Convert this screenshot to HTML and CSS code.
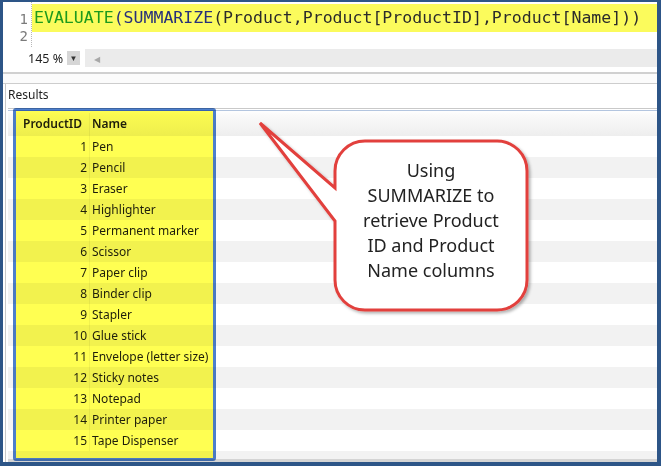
FILE: index.html
```html
<!DOCTYPE html>
<html lang="en">
<head>
    <meta charset="UTF-8">
    <title>SUMMARIZE - Results</title>
    <link rel="stylesheet" href="styles.css">
</head>
<body>
    <div class="frame">
        <!-- Редактор запроса -->
        <div class="editor">
            <div class="gutter"><span>1</span><span>2</span></div>
            <div class="code">
                <div class="line hl"><span class="kw">EVALUATE</span><span class="fn">(SUMMARIZE</span>(Product,Product[ProductID],Product[Name]))</div>
            </div>
        </div>

        <div class="zoombar">
            <span class="zoom">145 %</span>
            <span class="zoom-drop">&#9660;</span>
            <div class="hscroll"><span class="arrow">&#9664;</span></div>
        </div>

        <div class="splitter"></div>

        <!-- Результаты -->
        <div class="results">
            <div class="results-title">Results</div>
            <div class="grid">
                <div class="row head">
                    <div class="sel"></div>
                    <div class="id">ProductID</div>
                    <div class="name">Name</div>
                    <div class="fill"></div>
                </div>
                <div class="row"><div class="sel"></div><div class="id num">1</div><div class="name">Pen</div><div class="fill"></div></div>
                <div class="row"><div class="sel"></div><div class="id num">2</div><div class="name">Pencil</div><div class="fill"></div></div>
                <div class="row"><div class="sel"></div><div class="id num">3</div><div class="name">Eraser</div><div class="fill"></div></div>
                <div class="row"><div class="sel"></div><div class="id num">4</div><div class="name">Highlighter</div><div class="fill"></div></div>
                <div class="row"><div class="sel"></div><div class="id num">5</div><div class="name">Permanent marker</div><div class="fill"></div></div>
                <div class="row"><div class="sel"></div><div class="id num">6</div><div class="name">Scissor</div><div class="fill"></div></div>
                <div class="row"><div class="sel"></div><div class="id num">7</div><div class="name">Paper clip</div><div class="fill"></div></div>
                <div class="row"><div class="sel"></div><div class="id num">8</div><div class="name">Binder clip</div><div class="fill"></div></div>
                <div class="row"><div class="sel"></div><div class="id num">9</div><div class="name">Stapler</div><div class="fill"></div></div>
                <div class="row"><div class="sel"></div><div class="id num">10</div><div class="name">Glue stick</div><div class="fill"></div></div>
                <div class="row"><div class="sel"></div><div class="id num">11</div><div class="name">Envelope (letter size)</div><div class="fill"></div></div>
                <div class="row"><div class="sel"></div><div class="id num">12</div><div class="name">Sticky notes</div><div class="fill"></div></div>
                <div class="row"><div class="sel"></div><div class="id num">13</div><div class="name">Notepad</div><div class="fill"></div></div>
                <div class="row"><div class="sel"></div><div class="id num">14</div><div class="name">Printer paper</div><div class="fill"></div></div>
                <div class="row"><div class="sel"></div><div class="id num">15</div><div class="name">Tape Dispenser</div><div class="fill"></div></div>
                <div class="grid-rest"></div>
            </div>
        </div>

        <!-- Жёлтая подсветка колонок -->
        <div class="annot"></div>

        <!-- Выноска -->
        <svg class="callout-shape" width="290" height="210" viewBox="0 0 290 210">
            <defs>
                <filter id="shadow" x="-10%" y="-10%" width="120%" height="120%">
                    <feDropShadow dx="2" dy="2" stdDeviation="1.5" flood-color="#000" flood-opacity="0.3"/>
                </filter>
            </defs>
            <path d="M115 26 H247 A30 30 0 0 1 277 56 V165 A30 30 0 0 1 247 195 H115 A30 30 0 0 1 85 165 V106 L10 8 L85 73 V56 A30 30 0 0 1 115 26 Z"
                  fill="#fff" stroke="#e2403c" stroke-width="3" stroke-linejoin="miter" filter="url(#shadow)"/>
        </svg>
        <div class="callout-text">Using<br>SUMMARIZE to<br>retrieve Product<br>ID and Product<br>Name columns</div>
    </div>
</body>
</html>
```

FILE: styles.css
```css
* {
    margin: 0;
    padding: 0;
    box-sizing: border-box;
}

html, body {
    width: 661px;
    height: 466px;
    background: #fff;
    overflow: hidden;
    font-family: 'Noto Sans', sans-serif;
    color: #1e1e1e;
}

/* Рамка окна */
.frame {
    position: relative;
    width: 661px;
    height: 466px;
    border-style: solid;
    border-color: #2d5587;
    border-width: 2px 4px 4px 3px;
    display: flex;
    flex-direction: column;
}

/* Редактор */
.editor {
    display: flex;
    height: 45px;
}

.gutter {
    width: 29px;
    padding-top: 9px;
    padding-right: 3px;
    border-right: 1px dotted #b8b8b8;
    display: flex;
    flex-direction: column;
    align-items: flex-end;
    font-family: 'DejaVu Sans Mono', monospace;
    font-size: 14px;
    line-height: 16.5px;
    color: #7b7b7b;
}

.code {
    flex: 1;
    padding-top: 2px;
}

.line {
    height: 28px;
    line-height: 28px;
    padding-left: 2px;
    font-family: 'DejaVu Sans Mono', monospace;
    font-size: 16.55px;
    color: #2b2b2b;
    white-space: nowrap;
}

.line.hl {
    background: #fbfb5c;
}

.kw { color: #1d9a1d; }
.fn { color: #27307a; }

/* Масштаб и прокрутка */
.zoombar {
    display: flex;
    align-items: center;
    height: 22px;
    padding-left: 25px;
}

.zoom {
    font-size: 12.5px;
    color: #222;
    width: 39px;
}

.zoom-drop {
    width: 13px;
    height: 14px;
    background: #d6d6d6;
    color: #333;
    font-size: 8px;
    line-height: 14px;
    text-align: center;
}

.hscroll {
    flex: 1;
    height: 18px;
    margin-left: 5px;
    background: #ebebeb;
    display: flex;
    align-items: center;
    padding-left: 9px;
}

.arrow {
    font-size: 8px;
    color: #a8a8a8;
}

.splitter {
    height: 12px;
    margin-top: 3px;
    border-top: 2px solid #d0d0d0;
    border-bottom: 1px solid #cdcdcd;
    background: #fbfbfb;
}

/* Результаты */
.results {
    flex: 1;
    display: flex;
    flex-direction: column;
    border-left: 1px solid #c8c8c8;
    margin-left: 2px;
}

.results-title {
    height: 24px;
    line-height: 22px;
    padding-left: 2px;
    font-size: 12px;
}

.grid {
    flex: 1;
    display: flex;
    flex-direction: column;
    border-top: 1px solid #c9c9c9;
    border-bottom: 3px solid #d4d4d4;
    margin-left: 2px;
    padding-top: 1px;
    font-size: 12px;
}

.row {
    display: flex;
    height: 21px;
    line-height: 21px;
}

.row:nth-child(odd) {
    background: #f2f2f2;
}

.row.head {
    height: 26px;
    line-height: 22px;
    padding-top: 2px;
    border-top: 1px solid #b3c5df;
    background: linear-gradient(#fff, #fafafa 15%, #eeeeee);
    font-weight: 600;
}

.sel { width: 10px; }

.id {
    width: 72px;
    padding-right: 2px;
    border-right: 1px solid rgba(0, 0, 0, 0.05);
}

.num { text-align: right; }

.head .id { padding-left: 5px; }

.name {
    width: 122px;
    padding-left: 2px;
    white-space: nowrap;
}

.fill { flex: 1; }

.grid-rest {
    flex: 1;
    background: #f2f2f2;
}

/* Жёлтая подсветка колонок */
.annot {
    position: absolute;
    left: 10px;
    top: 106px;
    width: 203px;
    height: 353px;
    border: 3px solid #4d7fcc;
    border-radius: 3px;
    background: #ffff52;
    mix-blend-mode: multiply;
}

/* Выноска */
.callout-shape {
    position: absolute;
    left: 247px;
    top: 113px;
}

.callout-text {
    position: absolute;
    left: 332px;
    top: 139px;
    width: 192px;
    height: 169px;
    padding-bottom: 11px;
    display: flex;
    align-items: center;
    justify-content: center;
    text-align: center;
    font-size: 18px;
    line-height: 25px;
    color: #222;
}
```
